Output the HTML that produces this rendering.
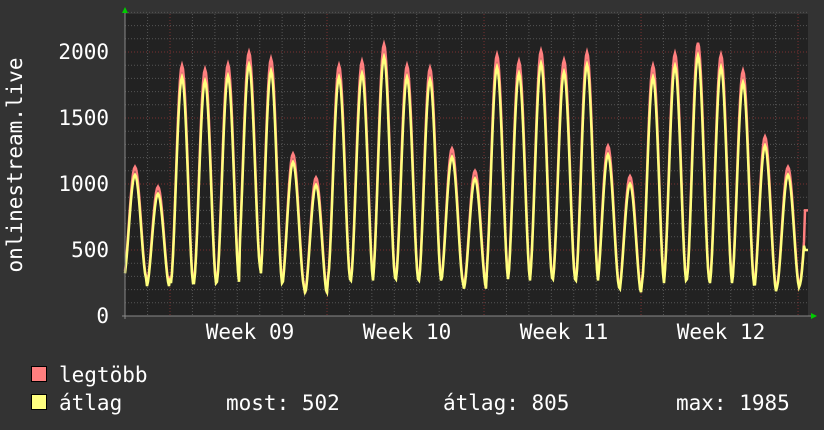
<!DOCTYPE html>
<html><head><meta charset="utf-8"><style>
html,body{margin:0;padding:0;background:#333333;}
svg{display:block}
text{font-family:"DejaVu Sans Mono","Liberation Mono",monospace;font-size:21px;fill:#fff}
</style></head><body>
<svg id="s" width="824" height="430" xmlns="http://www.w3.org/2000/svg">
<rect width="824" height="430" fill="#333333"/>
<rect x="125" y="14" width="683" height="302" fill="#222222"/>
<g id="grid"></g>
<g id="data"></g>
<line x1="122" y1="316" x2="812" y2="316" stroke="#888" stroke-width="1"/>
<line x1="125" y1="12" x2="125" y2="319" stroke="#888" stroke-width="1"/>
<polygon points="122,13 128,13 125,7" fill="#0c0"/>
<polygon points="811,313 811,319 817,316" fill="#0c0"/>
<g text-anchor="end">
<text x="109" y="59">2000</text>
<text x="109" y="125">1500</text>
<text x="109" y="191">1000</text>
<text x="109" y="257">500</text>
<text x="109" y="323">0</text>
</g>
<text transform="translate(22,165) rotate(-90)" text-anchor="middle">onlinestream.live</text>
<g text-anchor="middle">
<text x="250" y="339">Week 09</text>
<text x="407" y="339">Week 10</text>
<text x="564" y="339">Week 11</text>
<text x="721" y="339">Week 12</text>
</g>
<rect x="31.5" y="366.5" width="15" height="15" fill="#ff7f7f" stroke="#000"/>
<rect x="31.5" y="394.5" width="15" height="15" fill="#ffff7f" stroke="#000"/>
<text x="59" y="382">legtöbb</text>
<text x="59" y="410">átlag</text>
<text x="226" y="410">most: 502</text>
<text x="443" y="410">átlag: 805</text>
<text x="676" y="410">max: 1985</text>
</svg>
<script>
var g=document.getElementById('grid'),h='';
function Y(v){return 316-v*0.132;}
for(var v=100;v<=2300;v+=100){var y=Y(v);var maj=v%500==0;
h+='<line x1="125" x2="808" y1="'+y+'" y2="'+y+'" stroke="'+(maj?'#7a3030':'#555')+'" stroke-dasharray="1,2"/>';}
for(var k=-2;k<32;k++){var x=170+k*22.43;if(x<=126||x>808)continue;var maj=(k%7==0);
h+='<line y1="14" y2="316" x1="'+x+'" x2="'+x+'" stroke="'+(maj?'#7a3030':'#555')+'" stroke-dasharray="1,2"/>';}
g.innerHTML=h;
var px=[135,158,182,205,228,249,271,293,316,339,362,384,407,430,452,475,497,519,541,564,587,608,630,653,675,698,721,743,765,788,811];
var pk=[1130,980,1900,1870,1910,2000,1950,1230,1050,1900,1930,2060,1900,1880,1270,1100,1980,1930,2010,1940,2000,1290,1060,1900,1990,2070,1980,1860,1360,1130,1100];
var mn=[300,240,260,260,270,380,260,230,170,290,280,300,290,280,260,220,290,280,300,290,280,230,180,260,280,290,260,250,200,230,250];
function val(x,scale){var i;
for(i=0;i<px.length;i++){var d=(x-px[i])/22.43;if(Math.abs(d)<0.5){var b=mn[i];var c=Math.cos(d*Math.PI);c=c>0?Math.pow(c,1.7):0;
return b+(pk[i]*scale-b)*c;}}return 300;}
var r='',yv='';
for(var x=125;x<=808;x++){var a=val(x,1),b=val(x,0.96)-15;
if(x>=805){a=800;b=500;}
r+=x+','+Y(a).toFixed(1)+' ';yv+=x+','+Y(Math.max(b,180)).toFixed(1)+' ';}
document.getElementById('data').innerHTML='<polyline points="'+r+'" fill="none" stroke="#ff7f7f" stroke-width="2.5"/><polyline points="'+yv+'" fill="none" stroke="#ffff7f" stroke-width="2.5"/>';
</script>
</body></html>
